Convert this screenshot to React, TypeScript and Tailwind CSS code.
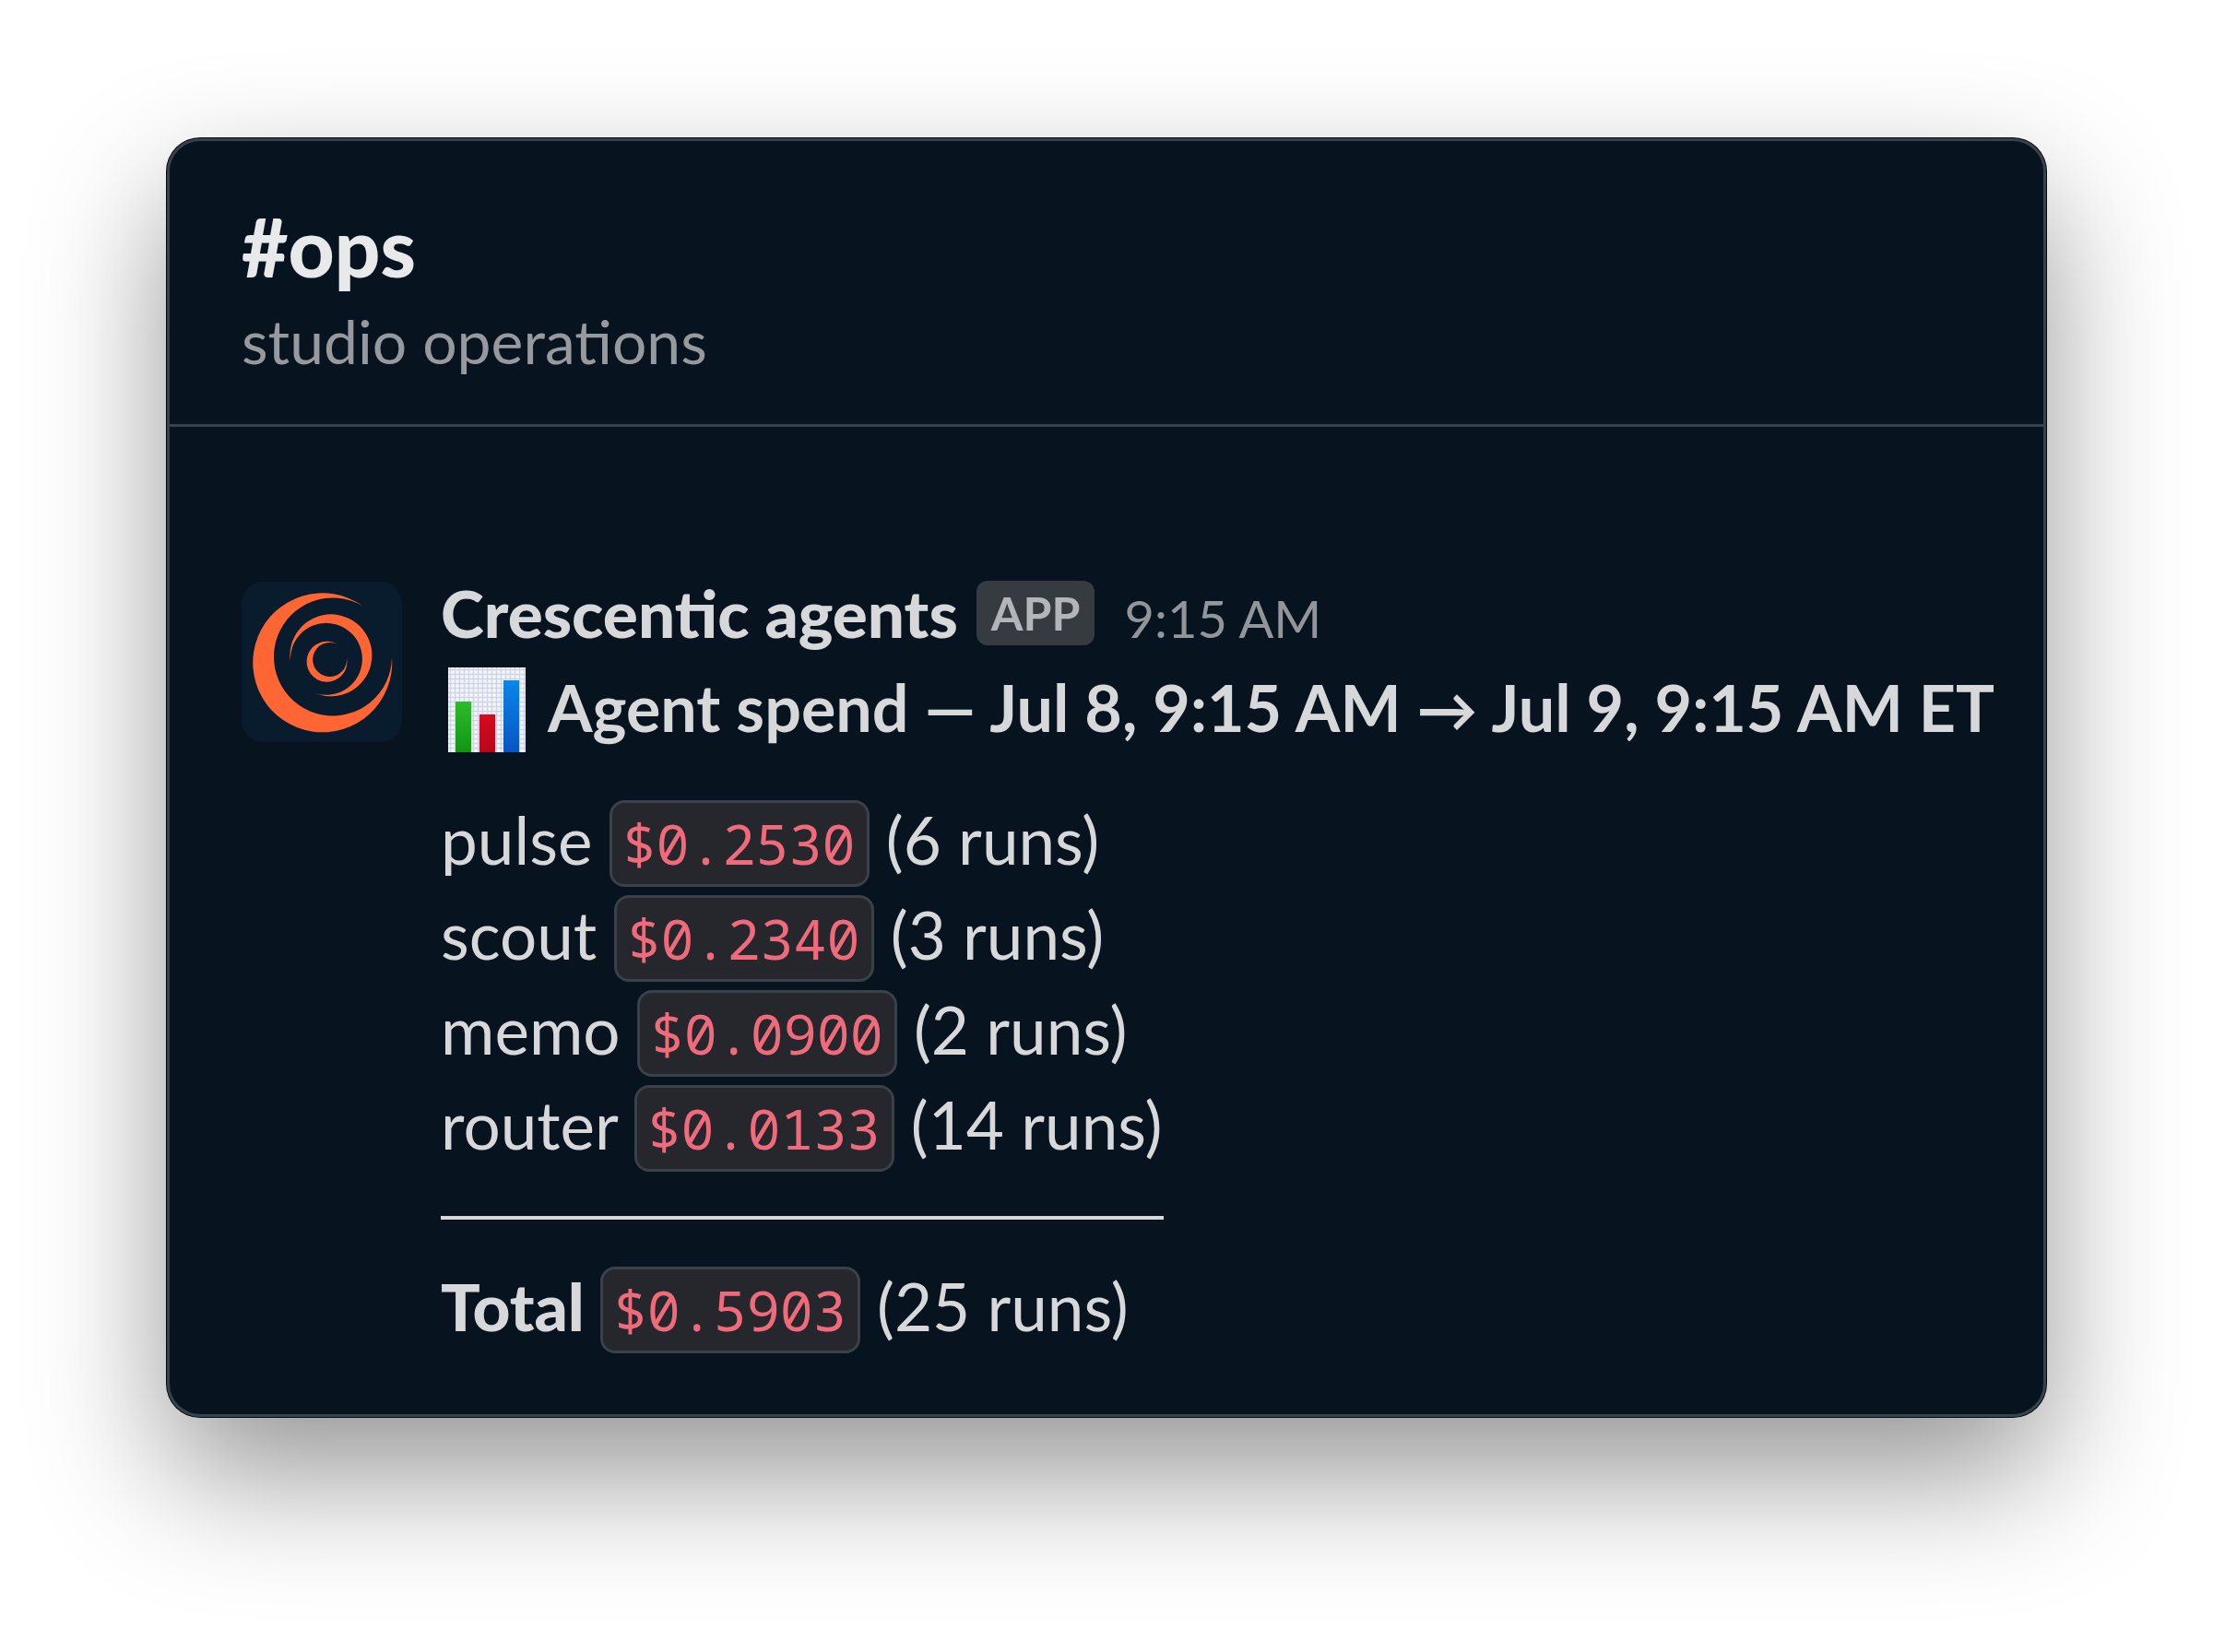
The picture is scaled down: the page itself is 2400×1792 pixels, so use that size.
import { clsx } from "clsx"

interface AgentSpend {
  name: string
  cost: string
  runs: number
  total?: boolean
}

const agents: AgentSpend[] = [
  { name: "pulse", cost: "$0.2530", runs: 6 },
  { name: "scout", cost: "$0.2340", runs: 3 },
  { name: "memo", cost: "$0.0900", runs: 2 },
  { name: "router", cost: "$0.0133", runs: 14 },
]

function AgentAvatar() {
  return (
    <svg viewBox="0 0 174 174" className="mt-[18px] size-[174px] shrink-0 rounded-3xl bg-[#081c2e]" aria-hidden="true">
      <g fill="#ff6633">
        <path d="M131 26A75.5 75.5 0 1 0 163 82A64 64 0 1 1 131 26Z" />
        <path d="M53 87A44.5 44.5 0 1 1 80 121A39 39 0 1 0 53 87Z" />
        <path d="M104 68A22 22 0 1 0 114 82A18.5 18.5 0 1 1 104 68Z" />
      </g>
    </svg>
  )
}

function ChartIcon() {
  return (
    <svg viewBox="0 0 84 92" className="mt-1 h-[92px] w-[84px] shrink-0" role="img" aria-label="Bar chart">
      <defs>
        <pattern id="grid" width="5" height="5" patternUnits="userSpaceOnUse">
          <rect width="5" height="5" fill="#f4f6fb" />
          <path d="M0 2.5H5M2.5 0V5" stroke="#cdd5e6" strokeWidth="1.4" />
        </pattern>
        <linearGradient id="green" x1="0" y1="0" x2="0" y2="1">
          <stop stopColor="#2cbc2c" />
          <stop offset="1" stopColor="#129512" />
        </linearGradient>
        <linearGradient id="red" x1="0" y1="0" x2="0" y2="1">
          <stop stopColor="#d60a20" />
          <stop offset="1" stopColor="#b8081a" />
        </linearGradient>
        <linearGradient id="blue" x1="0" y1="0" x2="0" y2="1">
          <stop stopColor="#0a86e8" />
          <stop offset="1" stopColor="#0a54c4" />
        </linearGradient>
      </defs>
      <rect width="84" height="92" fill="url(#grid)" />
      <rect x="8" y="37" width="17" height="55" fill="url(#green)" />
      <rect x="34" y="51" width="17" height="41" fill="url(#red)" />
      <rect x="60" y="14" width="17" height="78" fill="url(#blue)" />
    </svg>
  )
}

function SpendRow({ name, cost, runs, total }: AgentSpend) {
  return (
    <p>
      <span className={clsx(total && "font-black")}>{name} </span>
      <code className="inline-block rounded-2xl border-3 border-[#3a4249] bg-[#25272c] px-3 font-['Noto_Sans_Mono','Liberation_Mono',monospace] text-[60px] leading-[88px] text-[#ef6a7b]">
        {cost}
      </code>
      {` (${runs} runs)`}
    </p>
  )
}

export default function App() {
  return (
    <main className="min-h-screen bg-white px-[181px] py-[150px] font-['Lato','Noto_Sans',sans-serif] text-[#d7d8d9]">
      <section className="overflow-hidden rounded-[36px] border-3 border-[#38424b] bg-[#07141f] shadow-[0_0_0_1px_#02070c,0_62px_144px_rgba(0,0,0,0.42)]">
        <header className="border-b-3 border-[#38424b] px-[78px] pt-[63px] pb-[50px]">
          <h1 className="text-[87px] leading-[104px] font-black text-[#e8e9ea]">#ops</h1>
          <p className="mt-[10px] text-[66px] leading-[80px] text-[#96999d]">studio operations</p>
        </header>

        <article className="flex gap-[42px] pt-[150px] pb-[66px] pl-[78px]">
          <AgentAvatar />
          <div className="text-[71px] leading-[103px] whitespace-nowrap">
            <div className="flex items-baseline">
              <h2 className="font-black">Crescentic agents</h2>
              <span className="ml-5 self-center rounded-xl bg-[#363b42] px-4 text-[50px] leading-[70px] font-bold text-[#b3b5b8]">APP</span>
              <time className="ml-8 text-[56px] leading-[70px] text-[#92969a]">9:15 AM</time>
            </div>
            <div className="flex items-center gap-6 pl-2 text-[70px] font-bold">
              <ChartIcon />
              <p>
                Agent spend — Jul 8, 9:15 AM <span className="text-[66px] leading-none">→</span> Jul 9, 9:15 AM ET
              </p>
            </div>
            <div className="mt-10">
              {agents.map((agent) => (
                <SpendRow key={agent.name} {...agent} />
              ))}
            </div>
            <hr className="mt-12 mb-[42px] w-[784px] border-t-4 border-[#d7d8d9]" />
            <SpendRow name="Total" cost="$0.5903" runs={25} total />
          </div>
        </article>
      </section>
    </main>
  )
}
